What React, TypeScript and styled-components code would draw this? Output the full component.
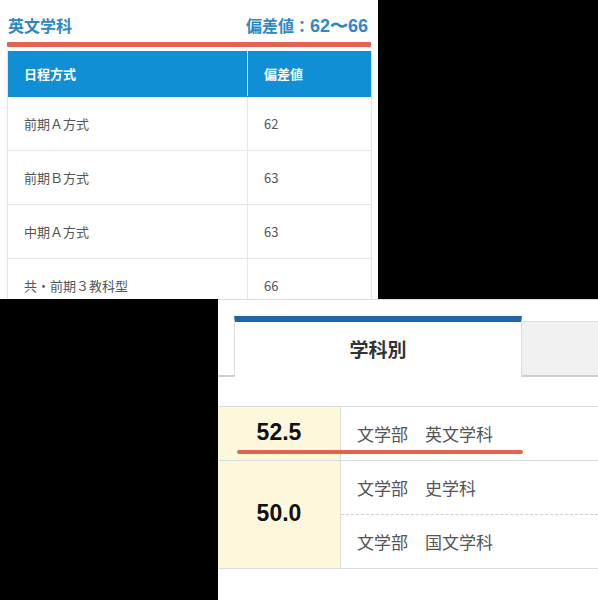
import React from "react";
import styled, { createGlobalStyle } from "styled-components";

const GlobalStyle = createGlobalStyle`
  html, body {
    margin: 0;
    padding: 0;
    background: #000;
  }
  body {
    font-family: "Noto Sans CJK JP", "Noto Sans", sans-serif;
    color: #555;
  }
`;

const Collage = styled.div`
  width: 598px;
  height: 600px;
  display: grid;
  grid-template-rows: 299px 301px;
  background: #000;
  overflow: hidden;
`;

// Top screenshot: score table
const TopShot = styled.section`
  width: 378px;
  height: 299px;
  background: #fff;
  overflow: hidden;
  padding-left: 7px;
  box-sizing: border-box;
`;

const TitleRow = styled.div`
  width: 360px;
  display: flex;
  justify-content: space-between;
  align-items: baseline;
  padding: 14px 0 0 1px;
  color: #2f88c5;
  font-weight: 700;
  font-size: 16px;
  line-height: 22px;
`;

const Score = styled.span`
  font-size: 16px;

  b {
    font-size: 18px;
    font-family: "Liberation Sans", "Noto Sans", sans-serif;
  }
`;

const Marker = styled.div`
  height: 5px;
  width: 364px;
  margin-top: 5px;
  background: #e2644f;
  border-radius: 1px;
`;

const ScoreTable = styled.div`
  margin-top: 4px;
  width: 365px;
  border-left: 1px solid #e2e2e2;
  border-right: 1px solid #e2e2e2;
  box-sizing: border-box;
`;

const TableRow = styled.div<{ $head?: boolean }>`
  display: grid;
  grid-template-columns: 239px 1fr;
  height: ${(p) => (p.$head ? "46px" : "54px")};
  background: ${(p) => (p.$head ? "#108fd7" : "#fff")};
  color: ${(p) => (p.$head ? "#fff" : "#555")};
  font-weight: ${(p) => (p.$head ? 700 : 400)};
  border-bottom: 1px solid ${(p) => (p.$head ? "#108fd7" : "#e6e6e6")};
  box-sizing: border-box;
`;

const Cell = styled.div<{ $head?: boolean }>`
  display: flex;
  align-items: center;
  padding-left: 16px;
  font-size: 13px;
  & + & {
    border-left: 1px solid ${(p) => (p.$head ? "#d9ecf8" : "#e6e6e6")};
  }
`;

// Bottom screenshot: tabbed list
const BottomShot = styled.section`
  grid-row: 2;
  margin-left: 218px;
  width: 380px;
  height: 301px;
  background: #fff;
  border-top: 1px solid #ddd;
  box-sizing: border-box;
  position: relative;
`;

const TabBar = styled.div`
  display: flex;
  align-items: flex-end;
  padding-top: 16px;
`;

const TabGap = styled.div`
  width: 16px;
  border-bottom: 2px solid #cfcfcf;
`;

const Tab = styled.div<{ $active?: boolean }>`
  box-sizing: border-box;
  display: flex;
  align-items: center;
  justify-content: center;
  ${(p) =>
    p.$active
      ? `
    width: 288px;
    height: 61px;
    background: #fff;
    border-top: 6px solid #1f66a7;
    border-left: 1px solid #ddd;
    border-right: 1px solid #ddd;
    padding-bottom: 2px;
    color: #333;
    font-weight: 700;
    font-size: 19px;
  `
      : `
    flex: 1;
    height: 56px;
    background: #f1f1f1;
    border-top: 1px solid #e0e0e0;
    border-bottom: 2px solid #cfcfcf;
  `}
`;

const RankTable = styled.div`
  margin-top: 29px;
  border-top: 1px solid #ddd;
  border-bottom: 1px solid #ddd;
`;

const RankRow = styled.div`
  display: grid;
  grid-template-columns: 123px 1fr;
  & + & {
    border-top: 1px solid #ddd;
  }
`;

const RankValue = styled.div`
  background: #fdf8dc;
  border-right: 1px solid #ddd;
  display: flex;
  align-items: center;
  justify-content: center;
  font-family: "Liberation Sans", Arial, sans-serif;
  font-weight: 700;
  font-size: 23px;
  color: #111;
  padding-bottom: 2px;
`;

const DeptList = styled.div`
  display: flex;
  flex-direction: column;
`;

const Dept = styled.div`
  height: 53px;
  display: flex;
  align-items: center;
  padding-left: 16px;
  font-size: 17px;
  color: #555;
  & + & {
    border-top: 1px dashed #cfcfcf;
  }
`;

const Underline = styled.div`
  position: absolute;
  left: 19px;
  top: 150px;
  width: 286px;
  height: 4px;
  border-radius: 2px;
  background: #e2644f;
`;

const scheduleRows = [
  { name: "前期Ａ方式", value: "62" },
  { name: "前期Ｂ方式", value: "63" },
  { name: "中期Ａ方式", value: "63" },
  { name: "共・前期３教科型", value: "66" },
];

const ranks = [
  { value: "52.5", depts: ["文学部　英文学科"] },
  { value: "50.0", depts: ["文学部　史学科", "文学部　国文学科"] },
];

const App = () => {
  return (
    <>
      <GlobalStyle />
      <Collage>
        <TopShot>
          <TitleRow>
            <span>英文学科</span>
            <Score>
              偏差値：<b>62〜66</b>
            </Score>
          </TitleRow>
          <Marker />
          <ScoreTable>
            <TableRow $head>
              <Cell $head>日程方式</Cell>
              <Cell $head>偏差値</Cell>
            </TableRow>
            {scheduleRows.map((row) => (
              <TableRow key={row.name}>
                <Cell>{row.name}</Cell>
                <Cell>{row.value}</Cell>
              </TableRow>
            ))}
          </ScoreTable>
        </TopShot>

        <BottomShot>
          <TabBar>
            <TabGap />
            <Tab $active>学科別</Tab>
            <Tab />
          </TabBar>
          <RankTable>
            {ranks.map((rank) => (
              <RankRow key={rank.value}>
                <RankValue>{rank.value}</RankValue>
                <DeptList>
                  {rank.depts.map((d) => (
                    <Dept key={d}>{d}</Dept>
                  ))}
                </DeptList>
              </RankRow>
            ))}
          </RankTable>
          <Underline />
        </BottomShot>
      </Collage>
    </>
  );
};

export default App;
